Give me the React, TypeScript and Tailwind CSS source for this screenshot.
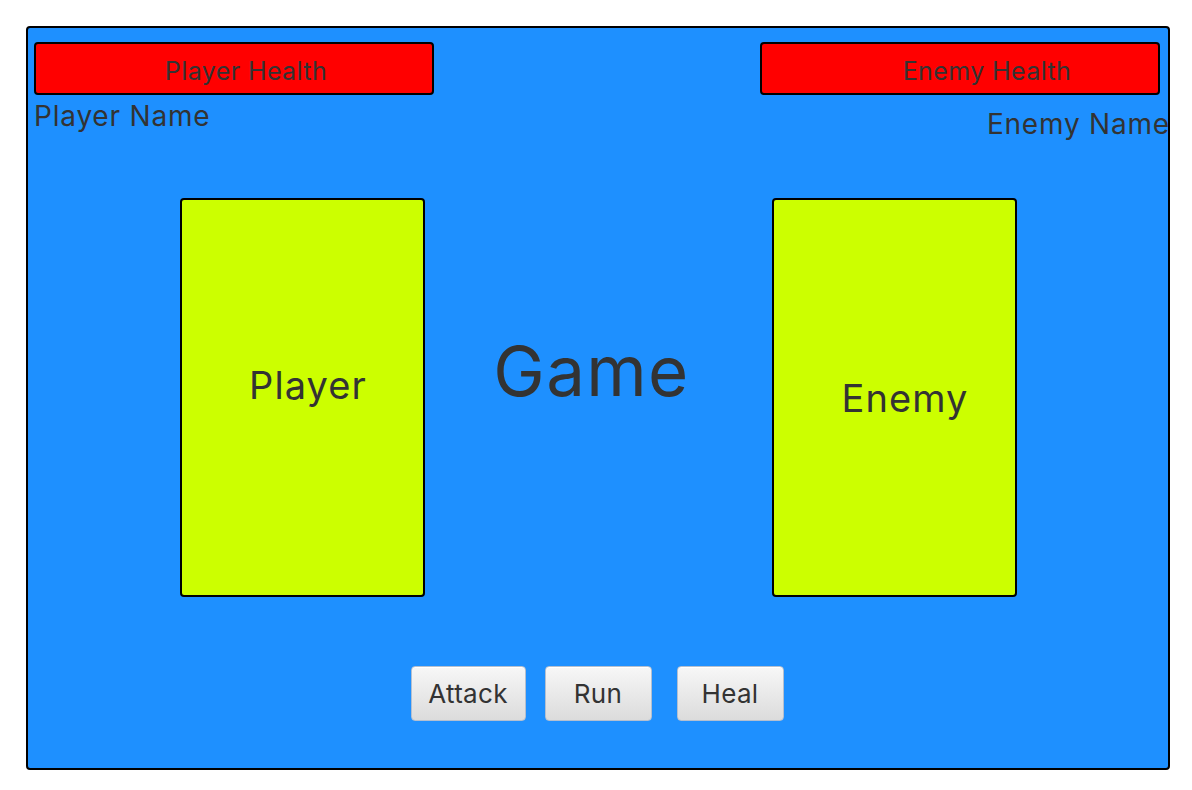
import React from "react";

const font = { fontFamily: "Inter, 'Noto Sans', sans-serif" };

function HealthBar({ label, pad }: { label: string; pad: string }) {
  return (
    <div className={`w-[400px] h-[53px] bg-[#ff0000] border-2 border-black rounded-[4px] flex items-center justify-center pt-[5px] ${pad}`}>
      <span className="text-[25px] leading-none tracking-[0.4px] text-[#333333]">{label}</span>
    </div>
  );
}

function Card({ label, pad }: { label: string; pad: string }) {
  return (
    <div className={`w-[245px] h-[399px] bg-[#ccff00] border-2 border-black rounded-[4px] flex justify-center ${pad}`}>
      <span className="text-[38px] leading-none tracking-[1.1px] text-[#333333]">{label}</span>
    </div>
  );
}

function ActionButton({ label, w }: { label: string; w: string }) {
  return (
    <button
      className={`${w} h-[55px] rounded-[4px] border border-[#b4bfcf] bg-gradient-to-b from-[#f7f7f7] to-[#dcdcdc] shadow-[inset_0_1px_0_#ffffff] text-[26px] leading-none tracking-[0.3px] text-[#333333]`}
    >
      {label}
    </button>
  );
}

export default function App() {
  return (
    <div className="min-h-screen bg-white p-[26px]" style={font}>
      <div className="w-[1144px] h-[744px] bg-[#1e90ff] border-2 border-black rounded-[4px] overflow-hidden flex flex-col">
        {/* top bars */}
        <div className="h-[170px] flex justify-between items-start pt-[14px] pl-[6px]">
          <div className="flex flex-col">
            <HealthBar label="Player Health" pad="pl-[24px]" />
            <span className="mt-[7px] text-[28px] leading-none tracking-[0.8px] text-[#333333]">Player Name</span>
          </div>
          <div className="flex flex-col items-end">
            <div className="mr-[8px]">
              <HealthBar label="Enemy Health" pad="pl-[54px]" />
            </div>
            <span className="mt-[15px] -mr-[2px] text-[28px] leading-none tracking-[0.8px] text-[#333333] whitespace-nowrap">Enemy Name</span>
          </div>
        </div>

        {/* arena */}
        <div className="h-[399px] flex items-start pl-[152px]">
          <Card label="Player" pad="pt-[166px] pl-[11px]" />
          <div className="w-[347px] flex justify-center pt-[139px] pr-[14px]">
            <span className="text-[69px] leading-none tracking-[1.4px] text-[#333333]">Game</span>
          </div>
          <Card label="Enemy" pad="pt-[179px] pl-[21px]" />
        </div>

        {/* actions */}
        <div className="flex justify-center items-start mt-[69px] pr-[2px]">
          <ActionButton label="Attack" w="w-[115px]" />
          <div className="w-[19px]" />
          <ActionButton label="Run" w="w-[107px]" />
          <div className="w-[25px]" />
          <ActionButton label="Heal" w="w-[107px]" />
        </div>
      </div>
    </div>
  );
}
